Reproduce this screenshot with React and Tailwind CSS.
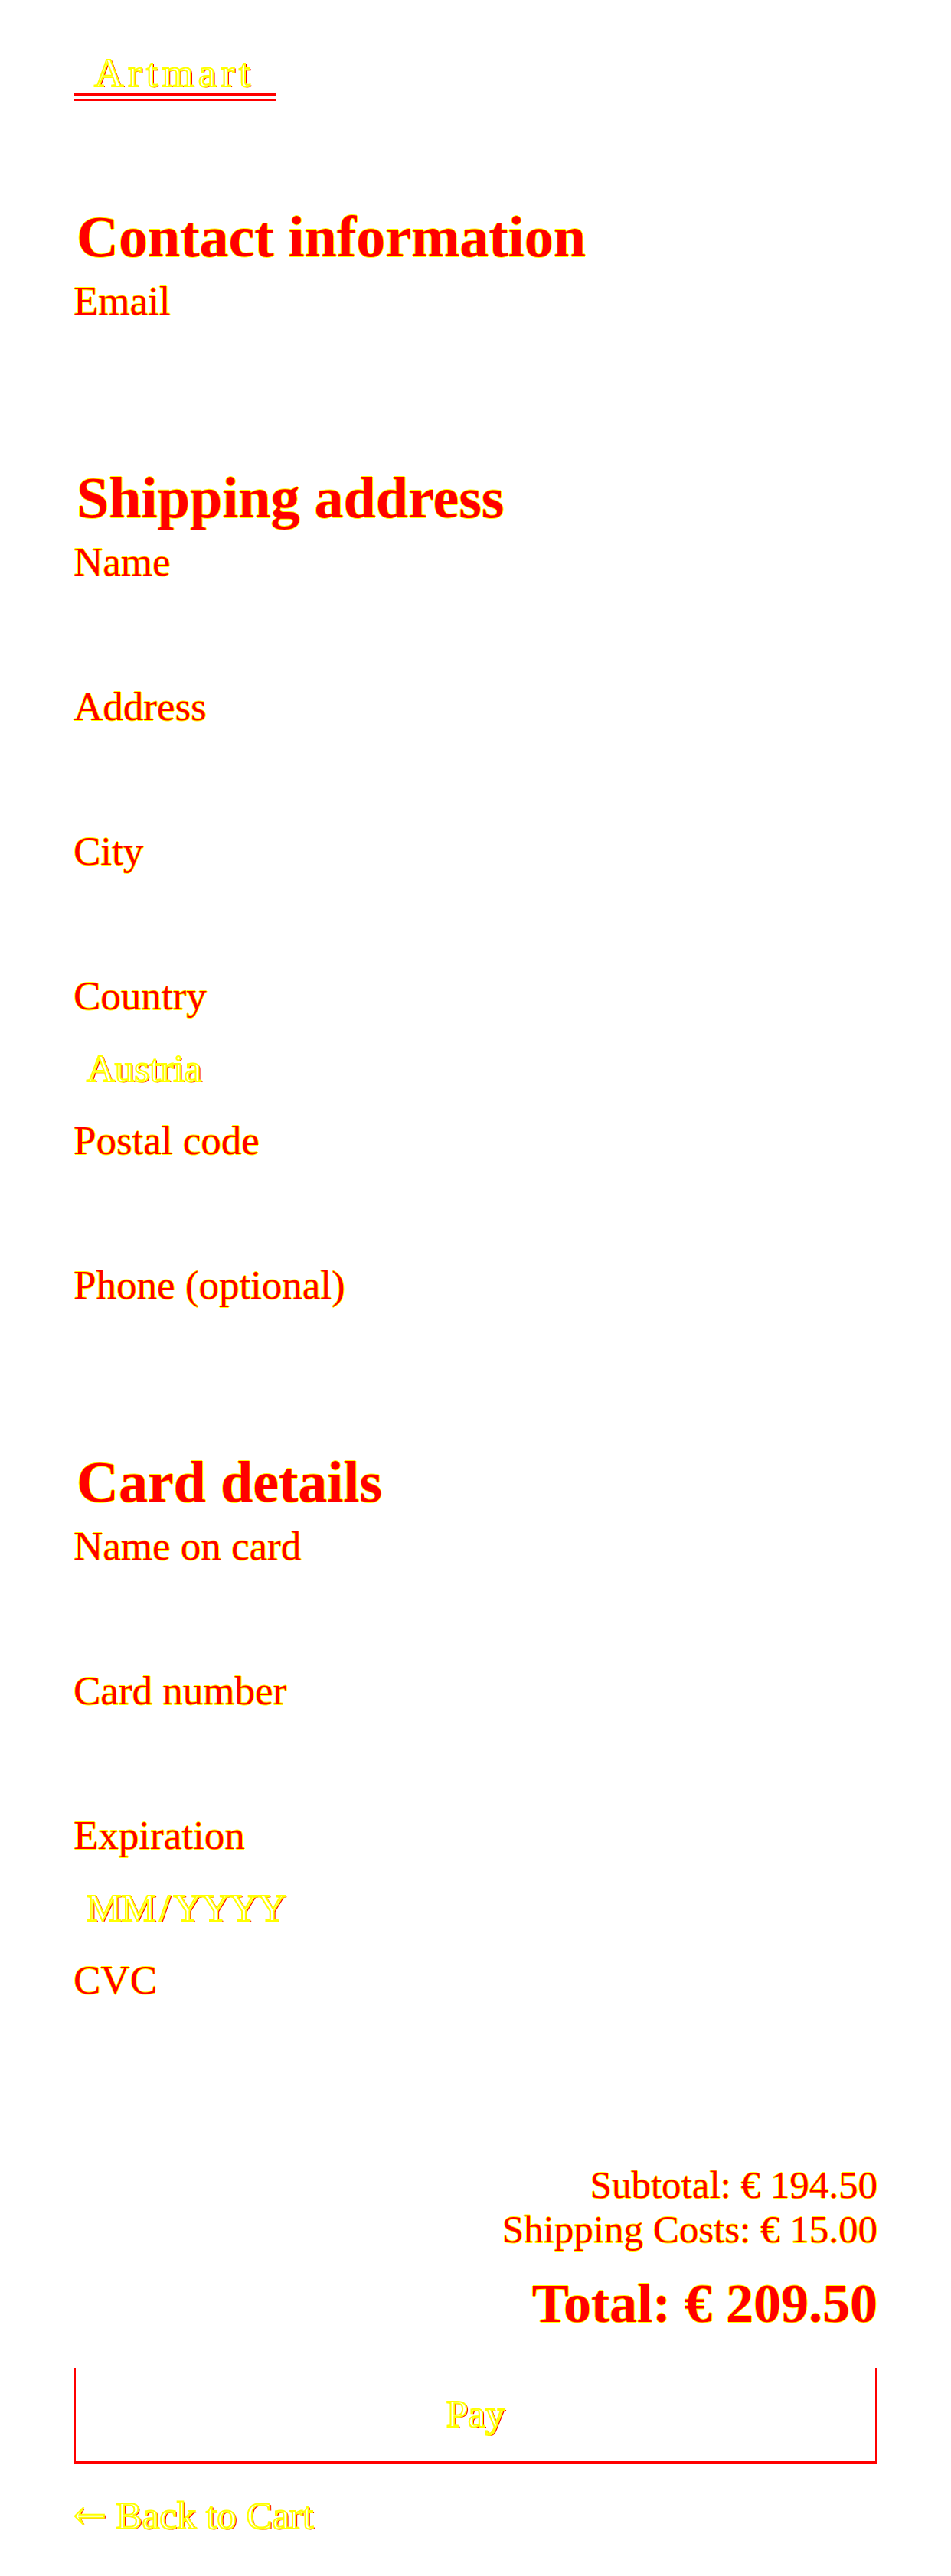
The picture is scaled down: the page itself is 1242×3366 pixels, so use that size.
import React from 'react';

const solid =
  'text-[#ff0000] [text-shadow:1px_0_0_#ffff00,-1px_0_0_#ffff00,0_1px_0_#ffff00,0_-1px_0_#ffff00]';
const ghost =
  'text-white [-webkit-text-stroke:2px_#ffff00] [text-shadow:2px_1px_0_#ff0000]';

function Field({ label, value }) {
  return (
    <div className="flex flex-col">
      <label className={`h-[95px] leading-[52px] text-[53px] ${solid}`}>{label}</label>
      <div className="h-[94px] leading-[52px] pl-[17px]">
        {value && <span className={ghost}>{value}</span>}
      </div>
    </div>
  );
}

function Section({ title, fields, className = '' }) {
  return (
    <section className={className}>
      <h2 className={`pl-[4px] mb-[18px] text-[76px] leading-[80px] font-bold ${solid}`}>
        {title}
      </h2>
      {fields.map((f) => (
        <Field key={f.label} label={f.label} value={f.value} />
      ))}
    </section>
  );
}

export default function App() {
  return (
    <div className="min-h-[3366px] bg-white px-[96px] pt-[58px] pb-[53px] font-['Liberation_Serif',serif] text-[51px]">
      {/* Header */}
      <header>
        <a
          href="#"
          className="inline-block px-[27px] border-b-[10px] border-double border-[#ff0000] leading-[54px] text-[53px] tracking-[6px]"
        >
          <span className={ghost}>Artmart</span>
        </a>
      </header>

      {/* Checkout form */}
      <form className="mt-[134px]">
        <Section title="Contact information" fields={[{ label: 'Email' }]} />
        <Section
          className="mt-[54px]"
          title="Shipping address"
          fields={[
            { label: 'Name' },
            { label: 'Address' },
            { label: 'City' },
            { label: 'Country', value: 'Austria' },
            { label: 'Postal code' },
            { label: 'Phone (optional)' },
          ]}
        />
        <Section
          className="mt-[54px]"
          title="Card details"
          fields={[
            { label: 'Name on card' },
            { label: 'Card number' },
            { label: 'Expiration', value: 'MM\u200A/\u200AYYYY' },
            { label: 'CVC' },
          ]}
        />

        {/* Summary */}
        <div className="mt-[76px] text-right">
          <p className={`leading-[58px] ${solid}`}>Subtotal: € 194.50</p>
          <p className={`leading-[58px] ${solid}`}>Shipping Costs: € 15.00</p>
          <h2 className={`mt-[30px] text-[72px] leading-[76px] font-bold ${solid}`}>
            Total: € 209.50
          </h2>
        </div>

        <button
          type="button"
          className="mt-[46px] w-full h-[125px] flex items-center justify-center border-x-[3px] border-b-[3px] border-t-0 border-[#ff0000] bg-white"
        >
          <span className={ghost}>Pay</span>
        </button>
      </form>

      <a href="#" className="block mt-[39px] leading-[58px]">
        <span className={ghost}>
          <span className="font-['DejaVu_Serif',serif] text-[51px]">←</span> Back to Cart
        </span>
      </a>
    </div>
  );
}
